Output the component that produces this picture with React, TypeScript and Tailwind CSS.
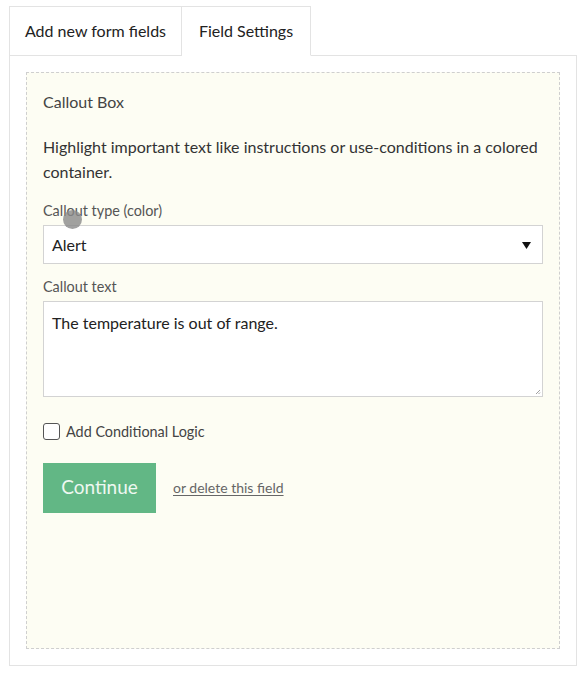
import { useState } from "react";

export default function App() {
    const [text, setText] = useState("The temperature is out of range.");
    const [logic, setLogic] = useState(false);

    return (
        <div className="relative min-h-[674px] bg-white px-[9px] pt-[6px] text-[#333] font-['Lato','Noto_Sans',sans-serif] w-[586px]">
            {/* tabs */}
            <div className="flex -mb-px relative z-10">
                <div className="w-[173px] h-[50px] border border-[#e3e3e3] bg-white flex items-center justify-center text-[16px] text-[#222]">
                    Add new form fields
                </div>
                <div className="w-[129px] h-[50px] border-t border-r border-b border-[#e3e3e3] border-b-white bg-white flex items-center justify-center text-[16px] text-[#222]">
                    Field Settings
                </div>
            </div>

            {/* panel */}
            <div className="w-[568px] border border-[#e3e3e3] p-4">
                <div className="h-[577px] border border-dashed border-[#cfcfcf] bg-[#fdfdf3] px-4 pt-4">
                    <h3 className="text-[16px] leading-[25px] text-[#444]">Callout Box</h3>
                    <p className="mt-5 text-[16px] leading-[25px] text-[#333]">
                        Highlight important text like instructions or use-conditions in a colored container.
                    </p>

                    <label className="block mt-[17px] text-[14.4px] leading-[20px] text-[#555]">Callout type (color)</label>
                    <div className="relative mt-1 h-[39px] border border-[#d3d3d3] bg-white flex items-center pl-[8px] text-[16px] text-[#222]">
                        Alert
                        <svg className="absolute right-[11px] top-[16px]" width="9" height="7" viewBox="0 0 9 7">
                            <path d="M0 0h9L4.5 7z" fill="#111" />
                        </svg>
                    </div>

                    <label className="block mt-[13px] text-[14.4px] leading-[20px] text-[#555]">Callout text</label>
                    <div className="relative mt-1">
                        <textarea
                            value={text}
                            onChange={(e) => setText(e.target.value)}
                            className="block w-full h-[96px] border border-[#d3d3d3] bg-white px-[8px] pt-[10px] text-[16px] leading-[22px] text-[#222] outline-none resize-none"
                        />
                        <svg className="absolute right-[2px] bottom-[2px]" width="6" height="6" viewBox="0 0 6 6">
                            <path d="M5 1L1 5M5 3.5L3.5 5" stroke="#888" strokeWidth="0.8" />
                        </svg>
                    </div>

                    <label className="mt-[24px] flex items-center gap-[6px] text-[14.4px] text-[#444] cursor-pointer">
                        <span
                            onClick={() => setLogic(!logic)}
                            className="w-[17px] h-[17px] rounded-[3px] border border-[#555] bg-white"
                        />
                        Add Conditional Logic
                    </label>

                    <div className="mt-[20px] flex items-center gap-[17px]">
                        <button className="w-[113px] h-[50px] bg-[#62b785] text-[#eef8f1] text-[19px]">Continue</button>
                        <a href="#" className="text-[14px] text-[#666] underline underline-offset-2">or delete this field</a>
                    </div>
                </div>
            </div>

            {/* cursor marker */}
            <div className="absolute left-[63px] top-[210px] w-[19px] h-[19px] rounded-full bg-[#8a8a8a]/80" />
        </div>
    );
}
